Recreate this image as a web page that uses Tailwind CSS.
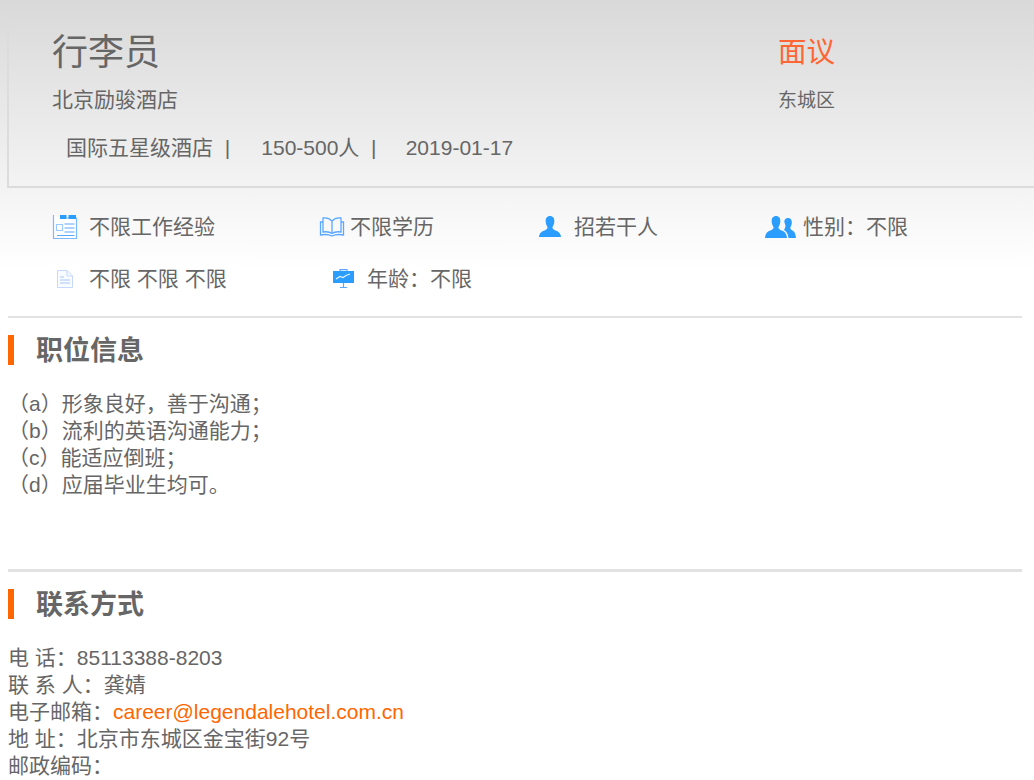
<!DOCTYPE html>
<html lang="zh-CN">
<head>
  <meta charset="UTF-8" />
  <title>行李员</title>
  <script src="https://cdn.jsdelivr.net/npm/@tailwindcss/browser@4"></script>
</head>
<body class="bg-white text-[#666] text-[21px] leading-[27px] font-['Liberation_Sans','Noto_Sans_CJK_SC',sans-serif] overflow-hidden h-[780px]">

  <!-- top -->
  <div class="h-[316px] bg-linear-to-b from-[#d9d9d9] to-white to-85% pt-[10px]">
    <div class="ml-[7px] h-[178px] border-l-2 border-b-2 border-[#dcdcdc] pl-[43px] flex">
      <div class="w-[726px]">
        <h1 class="text-[36px] leading-[40px] mt-[23px]">行李员</h1>
        <p class="mt-[13px]">北京励骏酒店</p>
        <p class="mt-[21px] pl-[14px] whitespace-pre"><span>国际五星级酒店  |</span><span class="ml-[2px]">     150-500人  |</span><span>     2019-01-17</span></p>
      </div>
      <div>
        <div class="text-[28.5px] leading-[40px] mt-[22px] text-[#ff6633]">面议</div>
        <p class="mt-[15px] text-[19px]">东城区</p>
      </div>
    </div>

    <div class="flex items-center h-[27px] mt-[25px] pl-[52px]">
      <div class="w-[267px] flex items-center">
        <svg class="w-[26px] h-[26px]" viewBox="0 0 26 26" fill="none">
          <path d="M1.500 1V24.500H24.500V4H8" fill="#fff" stroke="#7db9ff" stroke-width="1.200"/>
          <path d="M8 1h6.500v4H8zM16.500 1h7.500v4h-7.500z" fill="#2a9dff"/>
          <path d="M4.500 10.500h6v6h-6z" stroke="#9cc9ff" stroke-width="1.200"/>
          <path d="M12.500 10h10M12.500 14h10M12.500 18h10M5 21.500h17.500" stroke="#5aa8ff" stroke-width="1.200"/>
        </svg>
        <span class="ml-[11px]">不限工作经验</span>
      </div>
      <div class="w-[220px] flex items-center">
        <svg class="w-[26px] h-[20px]" viewBox="0 0 26 20" fill="none" stroke="#5aa8ff" stroke-width="1.300">
          <path d="M13 4C11 1.800 7 .5 4 1V15C7 14.500 11 15 13 16.500C15 15 19 14.500 22 15V1C19 .5 15 1.800 13 4ZM13 4V16.500"/>
          <path d="M4 5H1.500V18C5 17.300 10 17.500 13 19C16 17.500 21 17.300 24.500 18V5H22"/>
        </svg>
        <span class="ml-[5px]">不限学历</span>
      </div>
      <div class="w-[226px] flex items-center">
        <svg class="w-[22px] h-[21px]" viewBox="0 0 22 21" fill="#2a9dff">
          <path d="M11 0C14 0 15.500 2.300 15.300 5.500C15.200 7.800 14.300 9.800 13.500 11C13.300 12.500 14 13.300 16 14.200C18.500 15.300 21.500 16 22 21H0C.5 16 3.500 15.300 6 14.200C8 13.300 8.700 12.500 8.500 11C7.700 9.800 6.800 7.800 6.700 5.500C6.500 2.300 8 0 11 0Z"/>
        </svg>
        <span class="ml-[13px]">招若干人</span>
      </div>
      <div class="flex items-center">
        <svg class="w-[31px] h-[22px]" viewBox="0 0 31 22" fill="#2a9dff">
          <path d="M23 2C25.500 2 27 4 26.800 6.800C26.700 8.800 26 10.300 25.300 11.500C25.200 12.800 25.700 13.500 27 14.200C29 15.200 30.500 16.500 31 22H23.500C23.200 18 21.500 15.500 19 14C20 12 20.500 10.800 20.500 9.500C19.800 8 19.300 6 19.300 5C19.800 3 21 2 23 2Z"/>
          <path d="M11 0C14 0 15.500 2.300 15.300 5.500C15.200 7.800 14.300 9.800 13.500 11C13.300 12.500 14 13.300 16 14.200C18.500 15.300 21.500 16 22 22H0C.5 16 3.500 15.300 6 14.200C8 13.300 8.700 12.500 8.500 11C7.700 9.800 6.800 7.800 6.700 5.500C6.500 2.300 8 0 11 0Z"/>
        </svg>
        <span class="ml-[7px]">性别：不限</span>
      </div>
    </div>

    <div class="flex items-center h-[27px] mt-[25px] pl-[57px]">
      <div class="w-[276px] flex items-center">
        <svg class="w-[16px] h-[18px]" viewBox="0 0 16 18" fill="none" stroke="#c4d9fb" stroke-width="1">
          <path d="M.5 .5H10L15.500 6V17.500H.5Z" fill="#f8fbff"/>
          <path d="M10 .5V6H15.500"/>
          <path d="M3 7h4M3 10h10M3 13h10" stroke="#a9c8f7"/>
        </svg>
        <span class="ml-[16px]">不限 不限 不限</span>
      </div>
      <div class="flex items-center">
        <svg class="w-[21px] h-[19px]" viewBox="0 0 21 19" fill="none">
          <path d="M7 2V.7H14V2" stroke="#5aa8ff" stroke-width="1.200"/>
          <path d="M0 2H21V14H0Z" fill="#2a9dff"/>
          <path d="M3 10L7 7.500L10 8.500L13 6.500L17 5" stroke="#e8f4ff" stroke-width="1.200"/>
          <path d="M10.500 14V18M7 18.500H14" stroke="#5aa8ff" stroke-width="1.200"/>
        </svg>
        <span class="ml-[13px]">年龄：不限</span>
      </div>
    </div>
  </div>

  <!-- job info -->
  <section class="ml-2 mr-3 border-t-2 border-[#e2e2e2] h-[253px]">
    <div class="mt-[17px] h-[30px] border-l-[6px] border-[#ff6600] pl-[22px] text-[27px] leading-[32px] font-bold">职位信息</div>
    <div class="mt-[25px]">
      <p>（a）形象良好，善于沟通；</p>
      <p>（b）流利的英语沟通能力；</p>
      <p>（c）能适应倒班；</p>
      <p>（d）应届毕业生均可。</p>
    </div>
  </section>

  <!-- contact -->
  <section class="ml-2 mr-3 border-t-[3px] border-[#e2e2e2]">
    <div class="mt-[17px] h-[30px] border-l-[6px] border-[#ff6600] pl-[22px] text-[27px] leading-[32px] font-bold">联系方式</div>
    <div class="mt-[25px]">
      <p>电 话：85113388-8203</p>
      <p>联 系 人：龚婧</p>
      <p>电子邮箱：<a href="#" class="text-[#ff6600]">career@legendalehotel.com.cn</a></p>
      <p>地 址：北京市东城区金宝街92号</p>
      <p>邮政编码：</p>
    </div>
  </section>
</body>
</html>
